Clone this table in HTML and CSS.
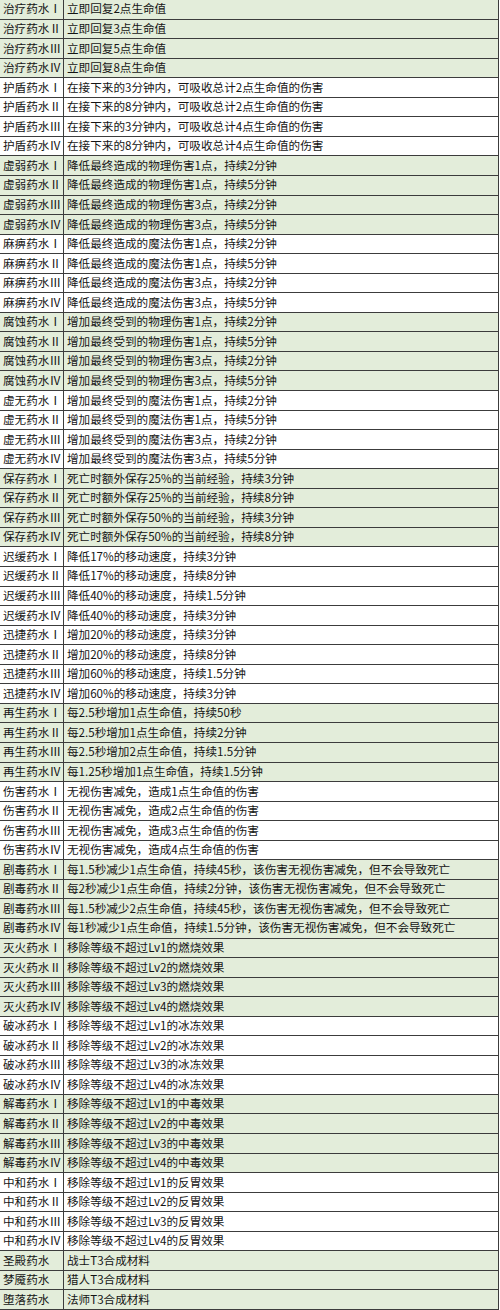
FILE: index.html
```html
<!DOCTYPE html>
<html lang="zh-CN">
<head>
<meta charset="utf-8">
<title>药水效果</title>
<link rel="stylesheet" href="styles.css">
</head>
<body>
<div class="sheet">
<div class="row g"><div class="name">治疗药水Ⅰ</div><div class="desc">立即回复2点生命值</div></div>
<div class="row g"><div class="name">治疗药水Ⅱ</div><div class="desc">立即回复3点生命值</div></div>
<div class="row g"><div class="name">治疗药水Ⅲ</div><div class="desc">立即回复5点生命值</div></div>
<div class="row g"><div class="name">治疗药水Ⅳ</div><div class="desc">立即回复8点生命值</div></div>
<div class="row"><div class="name">护盾药水Ⅰ</div><div class="desc">在接下来的3分钟内，可吸收总计2点生命值的伤害</div></div>
<div class="row"><div class="name">护盾药水Ⅱ</div><div class="desc">在接下来的8分钟内，可吸收总计2点生命值的伤害</div></div>
<div class="row"><div class="name">护盾药水Ⅲ</div><div class="desc">在接下来的3分钟内，可吸收总计4点生命值的伤害</div></div>
<div class="row"><div class="name">护盾药水Ⅳ</div><div class="desc">在接下来的8分钟内，可吸收总计4点生命值的伤害</div></div>
<div class="row g"><div class="name">虚弱药水Ⅰ</div><div class="desc">降低最终造成的物理伤害1点，持续2分钟</div></div>
<div class="row g"><div class="name">虚弱药水Ⅱ</div><div class="desc">降低最终造成的物理伤害1点，持续5分钟</div></div>
<div class="row g"><div class="name">虚弱药水Ⅲ</div><div class="desc">降低最终造成的物理伤害3点，持续2分钟</div></div>
<div class="row g"><div class="name">虚弱药水Ⅳ</div><div class="desc">降低最终造成的物理伤害3点，持续5分钟</div></div>
<div class="row"><div class="name">麻痹药水Ⅰ</div><div class="desc">降低最终造成的魔法伤害1点，持续2分钟</div></div>
<div class="row"><div class="name">麻痹药水Ⅱ</div><div class="desc">降低最终造成的魔法伤害1点，持续5分钟</div></div>
<div class="row"><div class="name">麻痹药水Ⅲ</div><div class="desc">降低最终造成的魔法伤害3点，持续2分钟</div></div>
<div class="row"><div class="name">麻痹药水Ⅳ</div><div class="desc">降低最终造成的魔法伤害3点，持续5分钟</div></div>
<div class="row g"><div class="name">腐蚀药水Ⅰ</div><div class="desc">增加最终受到的物理伤害1点，持续2分钟</div></div>
<div class="row g"><div class="name">腐蚀药水Ⅱ</div><div class="desc">增加最终受到的物理伤害1点，持续5分钟</div></div>
<div class="row g"><div class="name">腐蚀药水Ⅲ</div><div class="desc">增加最终受到的物理伤害3点，持续2分钟</div></div>
<div class="row g"><div class="name">腐蚀药水Ⅳ</div><div class="desc">增加最终受到的物理伤害3点，持续5分钟</div></div>
<div class="row"><div class="name">虚无药水Ⅰ</div><div class="desc">增加最终受到的魔法伤害1点，持续2分钟</div></div>
<div class="row"><div class="name">虚无药水Ⅱ</div><div class="desc">增加最终受到的魔法伤害1点，持续5分钟</div></div>
<div class="row"><div class="name">虚无药水Ⅲ</div><div class="desc">增加最终受到的魔法伤害3点，持续2分钟</div></div>
<div class="row"><div class="name">虚无药水Ⅳ</div><div class="desc">增加最终受到的魔法伤害3点，持续5分钟</div></div>
<div class="row g"><div class="name">保存药水Ⅰ</div><div class="desc">死亡时额外保存25%的当前经验，持续3分钟</div></div>
<div class="row g"><div class="name">保存药水Ⅱ</div><div class="desc">死亡时额外保存25%的当前经验，持续8分钟</div></div>
<div class="row g"><div class="name">保存药水Ⅲ</div><div class="desc">死亡时额外保存50%的当前经验，持续3分钟</div></div>
<div class="row g"><div class="name">保存药水Ⅳ</div><div class="desc">死亡时额外保存50%的当前经验，持续8分钟</div></div>
<div class="row"><div class="name">迟缓药水Ⅰ</div><div class="desc">降低17%的移动速度，持续3分钟</div></div>
<div class="row"><div class="name">迟缓药水Ⅱ</div><div class="desc">降低17%的移动速度，持续8分钟</div></div>
<div class="row"><div class="name">迟缓药水Ⅲ</div><div class="desc">降低40%的移动速度，持续1.5分钟</div></div>
<div class="row"><div class="name">迟缓药水Ⅳ</div><div class="desc">降低40%的移动速度，持续3分钟</div></div>
<div class="row"><div class="name">迅捷药水Ⅰ</div><div class="desc">增加20%的移动速度，持续3分钟</div></div>
<div class="row"><div class="name">迅捷药水Ⅱ</div><div class="desc">增加20%的移动速度，持续8分钟</div></div>
<div class="row"><div class="name">迅捷药水Ⅲ</div><div class="desc">增加60%的移动速度，持续1.5分钟</div></div>
<div class="row"><div class="name">迅捷药水Ⅳ</div><div class="desc">增加60%的移动速度，持续3分钟</div></div>
<div class="row g"><div class="name">再生药水Ⅰ</div><div class="desc">每2.5秒增加1点生命值，持续50秒</div></div>
<div class="row g"><div class="name">再生药水Ⅱ</div><div class="desc">每2.5秒增加1点生命值，持续2分钟</div></div>
<div class="row g"><div class="name">再生药水Ⅲ</div><div class="desc">每2.5秒增加2点生命值，持续1.5分钟</div></div>
<div class="row g"><div class="name">再生药水Ⅳ</div><div class="desc">每1.25秒增加1点生命值，持续1.5分钟</div></div>
<div class="row"><div class="name">伤害药水Ⅰ</div><div class="desc">无视伤害减免，造成1点生命值的伤害</div></div>
<div class="row"><div class="name">伤害药水Ⅱ</div><div class="desc">无视伤害减免，造成2点生命值的伤害</div></div>
<div class="row"><div class="name">伤害药水Ⅲ</div><div class="desc">无视伤害减免，造成3点生命值的伤害</div></div>
<div class="row"><div class="name">伤害药水Ⅳ</div><div class="desc">无视伤害减免，造成4点生命值的伤害</div></div>
<div class="row g"><div class="name">剧毒药水Ⅰ</div><div class="desc">每1.5秒减少1点生命值，持续45秒，该伤害无视伤害减免，但不会导致死亡</div></div>
<div class="row g"><div class="name">剧毒药水Ⅱ</div><div class="desc">每2秒减少1点生命值，持续2分钟，该伤害无视伤害减免，但不会导致死亡</div></div>
<div class="row g"><div class="name">剧毒药水Ⅲ</div><div class="desc">每1.5秒减少2点生命值，持续45秒，该伤害无视伤害减免，但不会导致死亡</div></div>
<div class="row g"><div class="name">剧毒药水Ⅳ</div><div class="desc">每1秒减少1点生命值，持续1.5分钟，该伤害无视伤害减免，但不会导致死亡</div></div>
<div class="row g"><div class="name">灭火药水Ⅰ</div><div class="desc">移除等级不超过Lv1的燃烧效果</div></div>
<div class="row g"><div class="name">灭火药水Ⅱ</div><div class="desc">移除等级不超过Lv2的燃烧效果</div></div>
<div class="row g"><div class="name">灭火药水Ⅲ</div><div class="desc">移除等级不超过Lv3的燃烧效果</div></div>
<div class="row g"><div class="name">灭火药水Ⅳ</div><div class="desc">移除等级不超过Lv4的燃烧效果</div></div>
<div class="row"><div class="name">破冰药水Ⅰ</div><div class="desc">移除等级不超过Lv1的冰冻效果</div></div>
<div class="row"><div class="name">破冰药水Ⅱ</div><div class="desc">移除等级不超过Lv2的冰冻效果</div></div>
<div class="row"><div class="name">破冰药水Ⅲ</div><div class="desc">移除等级不超过Lv3的冰冻效果</div></div>
<div class="row"><div class="name">破冰药水Ⅳ</div><div class="desc">移除等级不超过Lv4的冰冻效果</div></div>
<div class="row g"><div class="name">解毒药水Ⅰ</div><div class="desc">移除等级不超过Lv1的中毒效果</div></div>
<div class="row g"><div class="name">解毒药水Ⅱ</div><div class="desc">移除等级不超过Lv2的中毒效果</div></div>
<div class="row g"><div class="name">解毒药水Ⅲ</div><div class="desc">移除等级不超过Lv3的中毒效果</div></div>
<div class="row g"><div class="name">解毒药水Ⅳ</div><div class="desc">移除等级不超过Lv4的中毒效果</div></div>
<div class="row"><div class="name">中和药水Ⅰ</div><div class="desc">移除等级不超过Lv1的反胃效果</div></div>
<div class="row"><div class="name">中和药水Ⅱ</div><div class="desc">移除等级不超过Lv2的反胃效果</div></div>
<div class="row"><div class="name">中和药水Ⅲ</div><div class="desc">移除等级不超过Lv3的反胃效果</div></div>
<div class="row"><div class="name">中和药水Ⅳ</div><div class="desc">移除等级不超过Lv4的反胃效果</div></div>
<div class="row g"><div class="name">圣殿药水</div><div class="desc">战士T3合成材料</div></div>
<div class="row g"><div class="name">梦魇药水</div><div class="desc">猎人T3合成材料</div></div>
<div class="row g"><div class="name">堕落药水</div><div class="desc">法师T3合成材料</div></div>
</div>
</body>
</html>
```

FILE: styles.css
```css
html, body {
  margin: 0;
  padding: 0;
  background: #ffffff;
}

.sheet {
  width: 499px;
  height: 1310px;
  display: grid;
  grid-template-rows: repeat(67, 1fr);
  font-family: "Noto Sans CJK SC", "Noto Sans", sans-serif;
  font-size: 11.6px;
  color: #141414;
}

.row {
  display: grid;
  grid-template-columns: 64px 1fr;
  border-bottom: 1px solid #3c3c3c;
  background: #ffffff;
  min-height: 0;
}

.row.g {
  background: #e3edda;
}

.name,
.desc {
  display: flex;
  align-items: center;
  white-space: nowrap;
  overflow: hidden;
  line-height: 1;
}

.name {
  padding-left: 3px;
  border-right: 1px solid #3c3c3c;
}

.desc {
  padding-left: 3px;
  border-right: 1px solid #3c3c3c;
}
```
